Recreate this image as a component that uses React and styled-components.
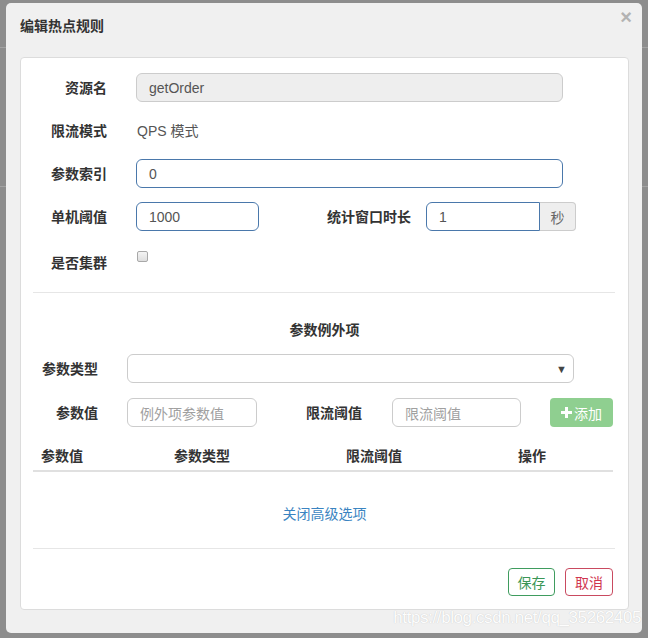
import React from "react";
import styled, { createGlobalStyle } from "styled-components";

const FONT = `"Helvetica Neue", Helvetica, Arial, "Liberation Sans", "Microsoft YaHei", "Noto Sans CJK SC", sans-serif`;

const Global = createGlobalStyle`
  html, body { margin: 0; padding: 0; }
  body {
    font-family: ${FONT};
    font-size: 14px;
    color: #333;
    background:
      linear-gradient(#a3a3a3, #a3a3a3) 0 47px / 100% 1px no-repeat,
      linear-gradient(#a3a3a3, #a3a3a3) 0 186px / 100% 1px no-repeat,
      #8d8d8d;
  }
  * { box-sizing: border-box; }
`;

const Backdrop = styled.div`
  width: 648px;
  height: 638px;
  padding: 3px 6px 5px 6px;
`;

const Modal = styled.div`
  position: relative;
  width: 636px;
  height: 630px;
  background: #f0f0f0;
  border-radius: 5px;
  overflow: hidden;
`;

const Header = styled.div`
  display: flex;
  height: 54px;
  padding: 13px 10px 0 14px;
`;

const Title = styled.h4`
  margin: 0;
  font-size: 14px;
  line-height: 20px;
  font-weight: 700;
  color: #333;
`;

const Close = styled.span`
  margin-left: auto;
  margin-top: -9px;
  font-family: Arial, "Liberation Sans", sans-serif;
  font-size: 20px;
  font-weight: 700;
  line-height: 20px;
  color: #b3b3b3;
`;

const Panel = styled.div`
  margin: 0 13px 0 14px;
  background: #fff;
  border: 1px solid #dcdcdc;
  border-radius: 4px;
  padding: 15px 0 13px;
`;

const Row = styled.div`
  display: flex;
  align-items: ${(p) => (p.$top ? "flex-start" : "center")};
  height: 29px;
  margin-top: ${(p) => p.$mt || 0}px;
  margin-bottom: ${(p) => (p.$mb === undefined ? 14 : p.$mb)}px;
`;

const Label = styled.label`
  flex: none;
  width: ${(p) => p.$w}px;
  margin-right: ${(p) => p.$mr}px;
  text-align: right;
  font-weight: 700;
  font-size: 14px;
  line-height: 20px;
  color: #333;
  padding-top: ${(p) => p.$pt || 0}px;
`;

const Static = styled.div`
  font-size: 14px;
  line-height: 20px;
  color: #555;
  padding-left: 1px;
`;

const Input = styled.div`
  flex: none;
  width: ${(p) => p.$w}px;
  height: 29px;
  padding: 0 12px;
  display: flex;
  align-items: center;
  font-size: 14px;
  color: ${(p) => (p.$ph ? "#a0a0a0" : "#555")};
  background: ${(p) => (p.$disabled ? "#eeeeee" : "#fff")};
  border: 1px solid ${(p) => (p.$focus ? "#4a78ab" : "#cccccc")};
  border-radius: ${(p) => (p.$group ? "6px 0 0 6px" : "6px")};
`;

const Group = styled.div`
  display: flex;
`;

const Addon = styled.div`
  width: 36px;
  height: 29px;
  display: flex;
  align-items: center;
  justify-content: center;
  background: #eeeeee;
  border: 1px solid #cccccc;
  border-left: none;
  border-radius: 0 4px 4px 0;
  color: #666;
  font-size: 14px;
`;

const Check = styled.span`
  display: block;
  width: 11px;
  height: 11px;
  margin-top: 6px;
  border: 1px solid #a8a8a8;
  border-radius: 2px;
  background: linear-gradient(#f4f4f4, #dedede);
`;

const Divider = styled.hr`
  margin: ${(p) => p.$mt}px 13px 0 12px;
  border: 0;
  border-top: 1px solid #e6e6e6;
  height: 0;
`;

const SectionTitle = styled.div`
  margin-top: 27px;
  text-align: center;
  font-weight: 700;
  font-size: 14px;
  line-height: 20px;
  color: #333;
`;

const Select = styled.div`
  flex: none;
  width: 447px;
  height: 29px;
  display: flex;
  align-items: center;
  justify-content: flex-end;
  padding-right: 6px;
  border: 1px solid #cccccc;
  border-radius: 6px;
  font-size: 11px;
  color: #444;
`;

const AddButton = styled.div`
  flex: none;
  width: 63px;
  height: 29px;
  margin-left: 29px;
  display: flex;
  align-items: center;
  justify-content: center;
  gap: 2px;
  background: #8fcf90;
  border-radius: 4px;
  color: #fff;
  font-size: 14px;
`;

const Table = styled.div`
  margin: 11px 15px 0 12px;
  display: grid;
  grid-template-columns: 133px 172px 172px 1fr;
  border-bottom: 2px solid #e0e0e0;
`;

const Th = styled.div`
  padding: 8px 8px 4px;
  font-weight: 700;
  font-size: 14px;
  line-height: 20px;
  color: #333;
`;

const LinkRow = styled.div`
  margin-top: 32px;
  text-align: center;
  font-size: 14px;
  line-height: 20px;
  color: #3a84c1;
`;

const Footer = styled.div`
  display: flex;
  justify-content: flex-end;
  gap: 10px;
  margin-top: 19px;
  padding-right: 15px;
`;

const Btn = styled.div`
  height: 28px;
  width: ${(p) => p.$w}px;
  display: flex;
  align-items: center;
  justify-content: center;
  border: 1px solid ${(p) => p.$c};
  color: ${(p) => p.$t};
  border-radius: 4px;
  background: #fff;
  font-size: 14px;
`;

const Watermark = styled.div`
  position: absolute;
  right: 1px;
  top: 605px;
  font-family: Arial, "Liberation Sans", sans-serif;
  font-size: 17px;
  color: #fdfdfd;
  text-shadow: 0 0 1px #bdbdbd;
  letter-spacing: -0.4px;
`;

function Plus() {
  return (
    <svg width="11" height="11" viewBox="0 0 11 11">
      <path d="M4 0h3v4h4v3H7v4H4V7H0V4h4z" fill="#fff" />
    </svg>
  );
}

export default function App() {
  return (
    <>
      <Global />
      <Backdrop>
        <Modal>
          <Header>
            <Title>编辑热点规则</Title>
            <Close>×</Close>
          </Header>
          <Panel>
            <Row>
              <Label $w={86} $mr={29}>资源名</Label>
              <Input $w={427} $disabled>getOrder</Input>
            </Row>
            <Row>
              <Label $w={86} $mr={29}>限流模式</Label>
              <Static>QPS 模式</Static>
            </Row>
            <Row>
              <Label $w={86} $mr={29}>参数索引</Label>
              <Input $w={427} $focus>0</Input>
            </Row>
            <Row>
              <Label $w={86} $mr={29}>单机阈值</Label>
              <Input $w={123} $focus>1000</Input>
              <Label $w={152} $mr={15}>统计窗口时长</Label>
              <Group>
                <Input $w={114} $focus $group>1</Input>
                <Addon>秒</Addon>
              </Group>
            </Row>
            <Row $top $mb={0}>
              <Label $w={86} $mr={30} $pt={8}>是否集群</Label>
              <Check />
            </Row>
            <Divider $mt={18} />
            <SectionTitle>参数例外项</SectionTitle>
            <Row $mt={14} $mb={15}>
              <Label $w={77} $mr={29}>参数类型</Label>
              <Select>▼</Select>
            </Row>
            <Row $mb={0}>
              <Label $w={77} $mr={29}>参数值</Label>
              <Input $w={130} $ph>例外项参数值</Input>
              <Label $w={105} $mr={30}>限流阈值</Label>
              <Input $w={129} $ph>限流阈值</Input>
              <AddButton>
                <Plus />
                添加
              </AddButton>
            </Row>
            <Table>
              <Th>参数值</Th>
              <Th>参数类型</Th>
              <Th>限流阈值</Th>
              <Th>操作</Th>
            </Table>
            <LinkRow>关闭高级选项</LinkRow>
            <Divider $mt={24} />
            <Footer>
              <Btn $w={47} $c="#3f9c5e" $t="#3a9656">保存</Btn>
              <Btn $w={48} $c="#c94a60" $t="#d0364f">取消</Btn>
            </Footer>
          </Panel>
          <Watermark>https://blog.csdn.net/qq_35262405</Watermark>
        </Modal>
      </Backdrop>
    </>
  );
}
